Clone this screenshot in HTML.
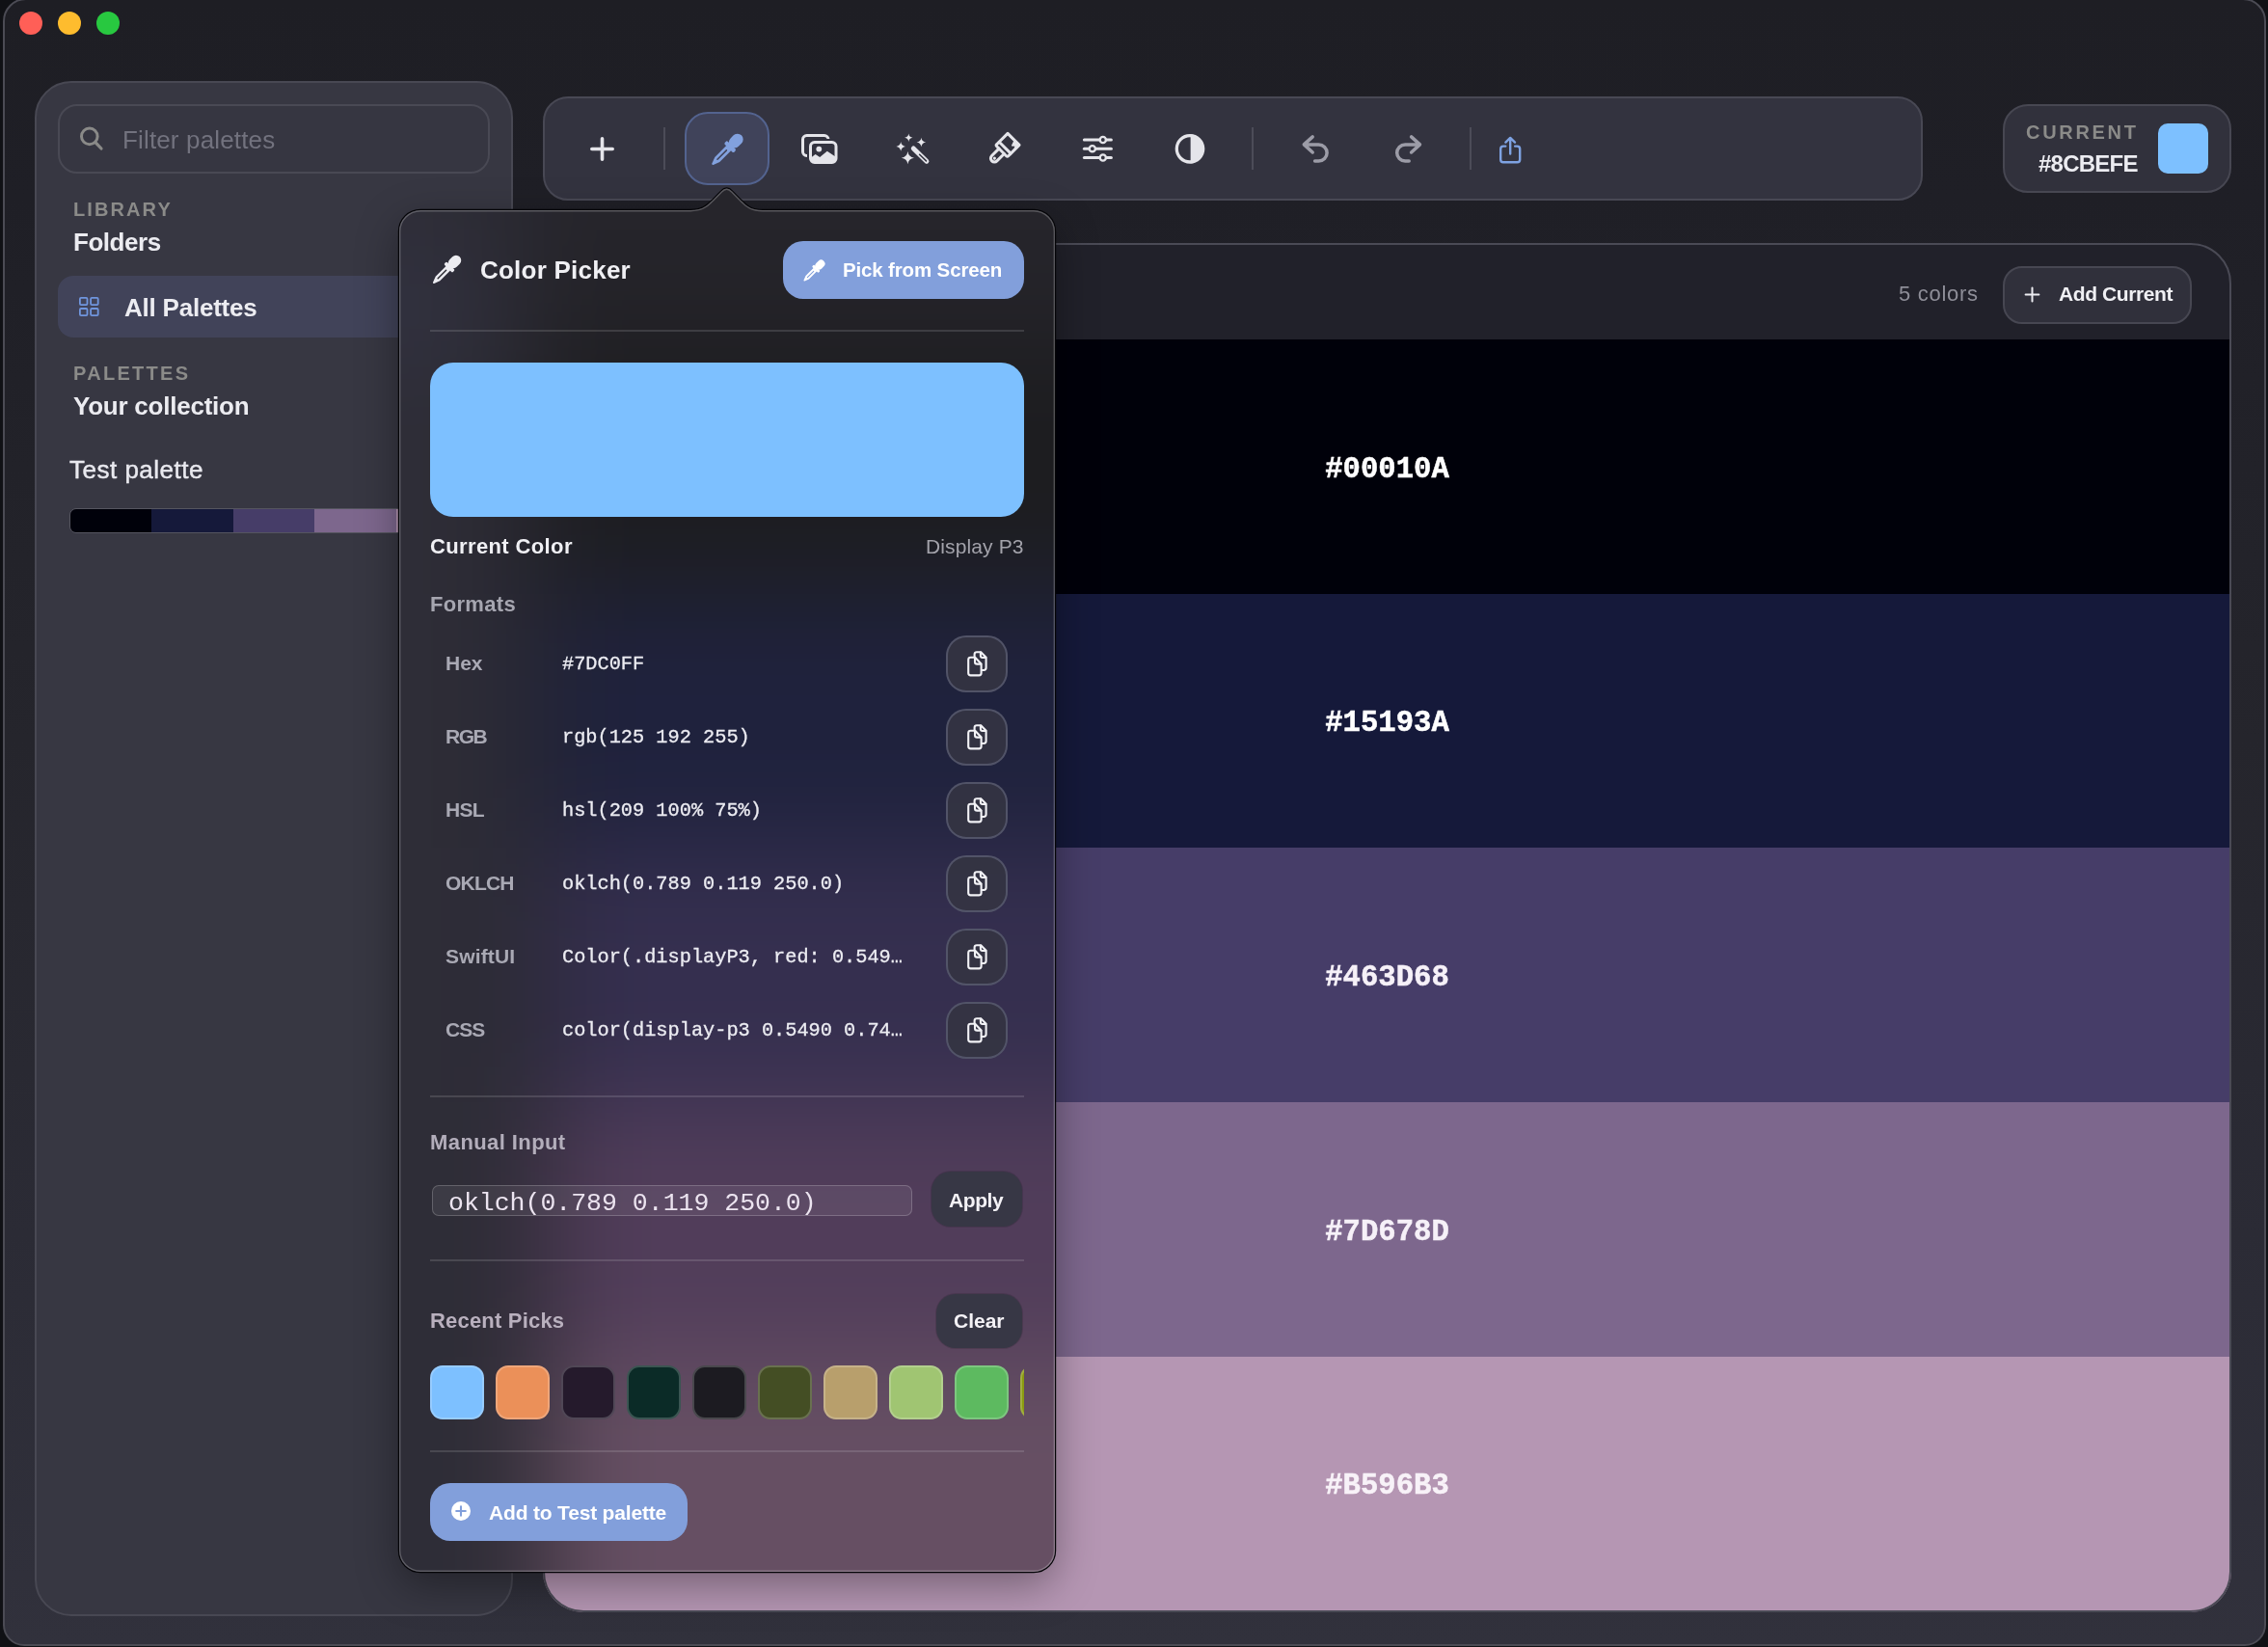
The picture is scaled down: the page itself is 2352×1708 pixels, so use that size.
<!DOCTYPE html>
<html lang="en">
<head>
<meta charset="utf-8">
<title>Color Picker</title>
<style>
*{box-sizing:border-box;margin:0;padding:0}
html,body{width:2352px;height:1708px;overflow:hidden;background:#101115}
body{position:relative;font-family:"Liberation Sans",sans-serif;color:#ececf1}
.abs{position:absolute}
.t{position:absolute;white-space:nowrap;line-height:1;font-family:"Liberation Sans",sans-serif}
.m{position:absolute;white-space:nowrap;line-height:1;font-family:"Liberation Mono",monospace}
.b{font-weight:700}
.t,.m,.hex{will-change:transform}
svg{position:absolute;overflow:visible}
#win{position:absolute;left:3px;top:-2px;width:2347px;height:1709px;border-radius:24px 24px 22px 22px;
 background:linear-gradient(180deg,#1e1e24 0%,#1f1f26 12%,#25252c 45%,#2b2b35 75%,#31313c 100%);
 border:2px solid #4b4b54}
#side{position:absolute;left:36px;top:84px;width:496px;height:1592px;border-radius:38px;background:#373742;border:2px solid #484853}
#search{position:absolute;left:60px;top:108px;width:448px;height:72px;border-radius:20px;background:#363641;border:2px solid #494954}
#allpal{position:absolute;left:60px;top:286px;width:448px;height:64px;border-radius:16px;background:#414359}
#pbar{position:absolute;left:72px;top:527px;width:424px;height:26px;border-radius:7px;overflow:hidden;border:1px solid #55555f;display:flex}
#pbar i{flex:1;display:block}
#tool{position:absolute;left:563px;top:100px;width:1431px;height:108px;border-radius:26px;background:#33333f;border:2px solid #484854}
#tsel{position:absolute;left:710px;top:116px;width:88px;height:76px;border-radius:24px;background:#40435a;border:2px solid #53638f}
.sep{position:absolute;top:132px;width:2px;height:44px;background:#4c4c58}
#cur{position:absolute;left:2077px;top:108px;width:237px;height:92px;border-radius:26px;background:#31313c;border:2px solid #474752}
#cursw{position:absolute;left:2238px;top:128px;width:52px;height:52px;border-radius:10px;background:#7dc0ff}
#main{position:absolute;left:563px;top:252px;width:1751px;height:1420px;border-radius:42px;background:#21212a;overflow:hidden}
#main .s{position:absolute;left:0;width:100%}
#mainb{position:absolute;left:563px;top:252px;width:1751px;height:1420px;border-radius:42px;border:2px solid #4a4a55;pointer-events:none}
#addcur{position:absolute;left:2077px;top:276px;width:196px;height:60px;border-radius:20px;background:#30303b;border:2px solid #474752}
.hex{position:absolute;left:563px;width:1751px;text-align:center;font-family:"Liberation Mono",monospace;font-weight:700;font-size:30.6px;line-height:1;color:#fff;-webkit-text-stroke:.5px currentColor}
#popshadow{position:absolute;left:414px;top:218px;width:680px;height:1412px;border-radius:22px;box-shadow:0 14px 44px rgba(0,0,0,.36)}
#pop{position:absolute;left:414px;top:190px;width:680px;height:1440px;overflow:hidden;background:#2a2a33;
 clip-path:path("M22,28 H302 C316,28 320,22 324.7,18 L334,8.5 Q339.6,2.5 345.2,8.5 L354.5,18 C359,22 363,28 377,28 H658 A22,22 0 0 1 680,50 V1418 A22,22 0 0 1 658,1440 H22 A22,22 0 0 1 0,1418 V50 A22,22 0 0 1 22,28 Z")}
#popbg{position:absolute;left:-414px;top:-190px;width:2352px;height:1708px;filter:blur(54px)}
#popbg div{position:absolute}
.div{position:absolute;left:446px;width:616px;height:2px;background:rgba(255,255,255,.13)}
#pick{position:absolute;left:812px;top:250px;width:250px;height:60px;border-radius:21px;background:#829fdb}
#bigsw{position:absolute;left:446px;top:376px;width:616px;height:160px;border-radius:24px;background:#7dc0ff}
.cp{position:absolute;left:981px;width:64px;height:59px;border-radius:21px;background:rgba(52,52,66,.92);border:2px solid rgba(120,124,150,.45)}
#inp{position:absolute;left:448px;top:1229px;width:498px;height:32px;border-radius:7px;background:rgba(255,255,255,.07);border:1.5px solid rgba(255,255,255,.2)}
.dbtn{position:absolute;border-radius:20px;background:#373745;box-shadow:0 0 0 1px rgba(0,0,0,.12)}
.rsw{position:absolute;top:1416px;width:56px;height:56px;border-radius:13px;border:2px solid rgba(255,255,255,.2)}
#addto{position:absolute;left:446px;top:1538px;width:267px;height:60px;border-radius:21px;background:#829fdb}
</style>
</head>
<body>
<div id="win"></div>

<!-- traffic lights -->
<div class="abs" style="left:20px;top:12px;width:24px;height:24px;border-radius:50%;background:#ff5f57"></div>
<div class="abs" style="left:60px;top:12px;width:24px;height:24px;border-radius:50%;background:#febc2e"></div>
<div class="abs" style="left:100px;top:12px;width:24px;height:24px;border-radius:50%;background:#28c840"></div>

<!-- SIDEBAR -->
<div id="side"></div>
<div id="search"></div>
<svg style="left:80px;top:129px" width="30" height="30" viewBox="0 0 30 30"><circle cx="12.8" cy="12.4" r="8.3" fill="none" stroke="#8a8a88" stroke-width="3"/><path d="M18.9 18.6 L25 25" stroke="#8a8a88" stroke-width="3.2" stroke-linecap="round"/></svg>
<div class="t" style="left:126.5px;top:131.8px;font-size:26px;letter-spacing:.15px;color:#72727e">Filter palettes</div>
<div class="t b" style="left:76px;top:206.8px;font-size:20px;color:#8b8b89;letter-spacing:2.1px">LIBRARY</div>
<div class="t b" style="left:76px;top:238px;font-size:26px;letter-spacing:-.47px">Folders</div>
<div id="allpal"></div>
<svg style="left:82px;top:308px" width="21" height="21" viewBox="0 0 21 21" fill="none" stroke="#7096de" stroke-width="1.8"><rect x="0.9" y="0.9" width="7.6" height="7.2" rx="1.2"/><rect x="12.1" y="0.9" width="7.6" height="7.2" rx="1.2"/><rect x="0.9" y="12" width="7.6" height="7.2" rx="1.2"/><rect x="12.1" y="12" width="7.6" height="7.2" rx="1.2"/></svg>
<div class="t b" style="left:128.5px;top:306px;font-size:26px;letter-spacing:-.22px">All Palettes</div>
<div class="t b" style="left:76px;top:376.9px;font-size:20px;color:#8b8b89;letter-spacing:2.3px">PALETTES</div>
<div class="t b" style="left:76px;top:408px;font-size:26px;letter-spacing:-.23px">Your collection</div>
<div class="t" style="left:72px;top:474px;font-size:26px;color:#e9e9ef;letter-spacing:.5px;-webkit-text-stroke:.45px #e9e9ef">Test palette</div>
<div id="pbar"><i style="background:#00010a"></i><i style="background:#15193a"></i><i style="background:#463d68"></i><i style="background:#7d678d"></i><i style="background:#b596b3"></i></div>

<!-- TOOLBAR -->
<div id="tool"></div>
<div id="tsel"></div>
<div class="sep" style="left:688px"></div>
<div class="sep" style="left:1298px"></div>
<div class="sep" style="left:1524px"></div>
<svg style="left:563px;top:100px" width="1431" height="108" viewBox="563 100 1431 108" fill="none">
<path d="M624.5,143.8 V165.2 M613.8,154.5 H635.2" stroke="#e5e5ea" stroke-width="3.6" stroke-linecap="round"/>
<g transform="translate(753.8,155.5) scale(1.045)" fill="#82a1de"><g transform="rotate(45)"><rect x="-5.6" y="-20.5" width="11.2" height="15.4" rx="5.6"/><rect x="-6.6" y="-6.6" width="13.2" height="4.2" rx="1.6"/><path d="M-3.4,-3 H3.4 V13.5 L0.9,20 Q0,21.4 -0.9,20 L-3.4,13.5 Z"/><rect x="-0.75" y="-0.2" width="1.5" height="14.2" rx=".75" fill="#40435a"/></g></g>
<rect x="832.5" y="140.5" width="26.5" height="21" rx="4.2" stroke="#e5e5ea" stroke-width="3"/>
<rect x="840.5" y="147.5" width="26.5" height="21" rx="4.2" fill="#33333f" stroke="#33333f" stroke-width="7"/>
<path d="M841,163.4 L845.6,160 L850.2,163 L857.8,156.8 L866.4,162.6 V168 H841 Z" fill="#e5e5ea"/>
<circle cx="849.3" cy="154.6" r="2.9" fill="#e5e5ea"/>
<rect x="840.5" y="147.5" width="26.5" height="21" rx="4.2" stroke="#e5e5ea" stroke-width="3"/>
<path d="M942.3,138.60000000000002 Q942.804,142.29600000000002 946.5,142.8 Q942.804,143.304 942.3,147.0 Q941.7959999999999,143.304 938.0999999999999,142.8 Q941.7959999999999,142.29600000000002 942.3,138.60000000000002 Z" fill="#e5e5ea"/>
<path d="M955.4,142.7 Q955.976,146.924 960.1999999999999,147.5 Q955.976,148.076 955.4,152.3 Q954.824,148.076 950.6,147.5 Q954.824,146.924 955.4,142.7 Z" fill="#e5e5ea"/>
<path d="M934.2,147.1 Q934.7760000000001,151.324 939.0,151.9 Q934.7760000000001,152.476 934.2,156.70000000000002 Q933.624,152.476 929.4000000000001,151.9 Q933.624,151.324 934.2,147.1 Z" fill="#e5e5ea"/>
<path d="M941.4,157.1 Q942.192,162.908 948.0,163.7 Q942.192,164.492 941.4,170.29999999999998 Q940.608,164.492 934.8,163.7 Q940.608,162.908 941.4,157.1 Z" fill="#e5e5ea"/>
<path d="M947.3,154 L960.9,167.2" stroke="#e5e5ea" stroke-width="5" stroke-linecap="round"/>
<path d="M953.6,160.2 L960.5,166.9" stroke="#33333f" stroke-width="1.5" stroke-linecap="round"/>
<g transform="translate(1039,156.4) rotate(45)" stroke="#e5e5ea" stroke-width="3" stroke-linejoin="round" stroke-linecap="round"><path d="M-8.5,-4 V-17 H8.5 V-4"/><path d="M1.5,-17 L3.6,-11.2 L6.3,-13.6 L8.5,-9.6 V-17 Z" fill="#e5e5ea" stroke-width="1"/><rect x="-8.5" y="-4.5" width="17" height="5" rx="1.5"/><path d="M-3.8,0.5 V11 A3.8,3.8 0 0 0 3.8,11 V0.5"/><circle cx="0" cy="10.8" r="0.9" fill="#e5e5ea" stroke-width="1.3"/></g>
<path d="M1124.4,145 H1152.4" stroke="#e5e5ea" stroke-width="3" stroke-linecap="round"/>
<circle cx="1143.8" cy="145" r="3.1" fill="#33333f" stroke="#e5e5ea" stroke-width="2.4"/>
<path d="M1124.4,154.2 H1152.4" stroke="#e5e5ea" stroke-width="3" stroke-linecap="round"/>
<circle cx="1132.8" cy="154.2" r="3.1" fill="#33333f" stroke="#e5e5ea" stroke-width="2.4"/>
<path d="M1124.4,163.5 H1152.4" stroke="#e5e5ea" stroke-width="3" stroke-linecap="round"/>
<circle cx="1143.8" cy="163.5" r="3.1" fill="#33333f" stroke="#e5e5ea" stroke-width="2.4"/>
<circle cx="1234" cy="154.3" r="13.7" stroke="#e5e5ea" stroke-width="3.3"/>
<path d="M1234.6,139.2 A15.2,15.2 0 0 1 1234.6,169.4 Z" fill="#e5e5ea"/>
<path d="M1361.2,141.9 L1352.3,149.9 L1361.2,158 M1353,149.9 H1367.5 A8.6,8.6 0 0 1 1367.5,167.1 H1363.6" stroke="#9c9ca7" stroke-width="3.5" stroke-linecap="round" stroke-linejoin="round"/>
<path d="M1463.6,141.9 L1472.5,149.9 L1463.6,158 M1471.8,149.9 H1457.3 A8.6,8.6 0 0 0 1457.3,167.1 H1461.2" stroke="#9c9ca7" stroke-width="3.5" stroke-linecap="round" stroke-linejoin="round"/>
<path d="M1561.3,151.6 H1559 Q1556.2,151.6 1556.2,154.4 V165.4 Q1556.2,168.2 1559,168.2 H1573.4 Q1576.2,168.2 1576.2,165.4 V154.4 Q1576.2,151.6 1573.4,151.6 H1571.1 M1566.2,143.4 V159.6 M1561.4,147.6 L1566.2,142.9 L1571,147.6" stroke="#7ea2e2" stroke-width="2.4" stroke-linecap="round" stroke-linejoin="round"/>
</svg>

<!-- CURRENT -->
<div id="cur"></div>
<div class="t b" style="left:2101px;top:126.6px;font-size:20px;color:#8b8b89;letter-spacing:2.7px">CURRENT</div>
<div class="t b" style="left:2114px;top:157.8px;font-size:24px;letter-spacing:-.77px;color:#ececf1">#8CBEFE</div>
<div id="cursw"></div>

<!-- MAIN PANEL -->
<div id="main">
 <div class="s" style="top:100px;height:264px;background:#00010a"></div>
 <div class="s" style="top:364px;height:264px;background:#15193a"></div>
 <div class="s" style="top:627px;height:265px;background:#463d68"></div>
 <div class="s" style="top:891px;height:264px;background:#7d678d"></div>
 <div class="s" style="top:1155px;height:266px;background:#b596b3"></div>
</div>
<div id="mainb"></div>
<div class="t" style="left:1968.5px;top:293.6px;font-size:22px;color:#8e8e98;letter-spacing:.7px">5 colors</div>
<div id="addcur"></div>
<svg style="left:2098px;top:296px" width="19" height="19" viewBox="0 0 19 19"><path d="M9.5 2.6 V16.4 M2.6 9.5 H16.4" stroke="#ececf1" stroke-width="2" stroke-linecap="round"/></svg>
<div class="t b" style="left:2134.5px;top:294.4px;font-size:21px;letter-spacing:-.41px;color:#f0f0f4">Add Current</div>
<div class="hex" style="top:471.6px">#00010A</div>
<div class="hex" style="top:735.3px">#15193A</div>
<div class="hex" style="top:999px;color:#f6f1f8">#463D68</div>
<div class="hex" style="top:1262.7px;color:#f6f1f8">#7D678D</div>
<div class="hex" style="top:1526.4px;color:#f8f2f8">#B596B3</div>

<!-- POPOVER -->
<div id="popshadow"></div>
<svg style="left:414px;top:190px" width="680" height="1440" viewBox="0 0 680 1440" fill="none"><path d="M22,28 H302 C316,28 320,22 324.7,18 L334,8.5 Q339.6,2.5 345.2,8.5 L354.5,18 C359,22 363,28 377,28 H658 A22,22 0 0 1 680,50 V1418 A22,22 0 0 1 658,1440 H22 A22,22 0 0 1 0,1418 V50 A22,22 0 0 1 22,28 Z" stroke="#050508" stroke-width="2.4"/></svg>
<div id="pop"><div id="popbg">
<div style="left:0;top:-100px;width:1700px;height:2108px;background:#25242a"></div>
<div style="left:36px;top:84px;width:496px;height:1900px;border-radius:38px 38px 0 0;background:#2e2d37"></div>
<div style="left:60px;top:286px;width:448px;height:64px;border-radius:16px;background:#333445"></div>
<div style="left:563px;top:100px;width:1200px;height:108px;border-radius:26px;background:#27262c"></div>
<div style="left:563px;top:252px;width:1200px;height:1800px;border-radius:42px 0 0 0;overflow:hidden;background:#25242a">
<div style="left:0;top:100px;width:100%;height:264px;background:#1d1d20"></div>
<div style="left:0;top:364px;width:100%;height:264px;background:#1f223d"></div>
<div style="left:0;top:627px;width:100%;height:265px;background:#352f4f"></div>
<div style="left:0;top:891px;width:100%;height:264px;background:#513d5a"></div>
<div style="left:0;top:1155px;width:100%;height:700px;background:#664f63"></div>
</div>
</div><svg style="left:0;top:0" width="680" height="1440" viewBox="0 0 680 1440" fill="none"><path d="M22,28 H302 C316,28 320,22 324.7,18 L334,8.5 Q339.6,2.5 345.2,8.5 L354.5,18 C359,22 363,28 377,28 H658 A22,22 0 0 1 680,50 V1418 A22,22 0 0 1 658,1440 H22 A22,22 0 0 1 0,1418 V50 A22,22 0 0 1 22,28 Z" stroke="rgba(255,255,255,.23)" stroke-width="2.8"/></svg></div>


<svg style="left:463px;top:280.3px" width="1" height="1" viewBox="0 0 1 1" fill="#ececf1"><g transform="scale(.945)"><g transform="rotate(45)"><rect x="-5.6" y="-20.5" width="11.2" height="15.4" rx="5.6"/><rect x="-6.6" y="-6.6" width="13.2" height="4.2" rx="1.6"/><path d="M-3.4,-3 H3.4 V13.5 L0.9,20 Q0,21.4 -0.9,20 L-3.4,13.5 Z"/><rect x="-0.75" y="-0.2" width="1.5" height="14.2" rx=".75" fill="#28282f"/></g></g></svg>
<div class="t b" style="left:497.5px;top:267.2px;font-size:26px;letter-spacing:.23px;color:#f0f0f4">Color Picker</div>
<div id="pick"></div>
<svg style="left:844.2px;top:280.8px" width="1" height="1" viewBox="0 0 1 1" fill="#fff"><g transform="scale(.71)"><g transform="rotate(45)"><rect x="-5.6" y="-20.5" width="11.2" height="15.4" rx="5.6"/><rect x="-6.6" y="-6.6" width="13.2" height="4.2" rx="1.6"/><path d="M-3.4,-3 H3.4 V13.5 L0.9,20 Q0,21.4 -0.9,20 L-3.4,13.5 Z"/><rect x="-0.75" y="-0.2" width="1.5" height="14.2" rx=".75" fill="#829fdb"/></g></g></svg>
<div class="t b" style="left:874px;top:269.6px;font-size:20.5px;letter-spacing:-.15px;color:#fff">Pick from Screen</div>
<div class="div" style="top:342px"></div>
<div id="bigsw"></div>
<div class="t b" style="left:446px;top:555.5px;font-size:22px;letter-spacing:.37px;color:#f0f0f4">Current Color</div>
<div class="t" style="right:1290px;top:556.2px;font-size:21px;letter-spacing:.12px;color:#a3a3ab">Display P3</div>
<div class="t b" style="left:446px;top:615.7px;font-size:22px;letter-spacing:.31px;color:#a6a6b0">Formats</div>
<div class="t b" style="left:462px;top:677.2px;font-size:21px;color:#a9a9b4">Hex</div>
<div class="m" style="left:582.5px;top:679.4px;font-size:20.3px;color:#ececf2;-webkit-text-stroke:.3px #ececf2">#7DC0FF</div>
<div class="cp" style="top:658.5px"></div>
<svg style="left:1002.6px;top:675.2px" width="21" height="27" viewBox="0 0 21 27" fill="none" stroke="#f2f2f6" stroke-width="2.1" stroke-linejoin="round" stroke-linecap="round"><path d="M7.6,6.6 V3.6 Q7.6,1.2 10,1.2 H14.2 L19.6,6.8 V17.6 Q19.6,20 17.2,20 H15.4" /><path d="M13.9,1.6 V5 Q13.9,7 15.9,7 H19.2"/><path d="M3.6,6.8 H8.2 L14.6,13.4 V23 Q14.6,25.4 12.2,25.4 H3.6 Q1.2,25.4 1.2,23 V9.2 Q1.2,6.8 3.6,6.8 Z"/><path d="M8,7.2 V11.4 Q8,13.6 10.2,13.6 H14.2"/></svg>
<div class="t b" style="left:462px;top:753.2px;font-size:21px;letter-spacing:-1.5px;color:#a9a9b4">RGB</div>
<div class="m" style="left:582.5px;top:755.4px;font-size:20.3px;color:#ececf2;-webkit-text-stroke:.3px #ececf2">rgb(125 192 255)</div>
<div class="cp" style="top:734.5px"></div>
<svg style="left:1002.6px;top:751.2px" width="21" height="27" viewBox="0 0 21 27" fill="none" stroke="#f2f2f6" stroke-width="2.1" stroke-linejoin="round" stroke-linecap="round"><path d="M7.6,6.6 V3.6 Q7.6,1.2 10,1.2 H14.2 L19.6,6.8 V17.6 Q19.6,20 17.2,20 H15.4" /><path d="M13.9,1.6 V5 Q13.9,7 15.9,7 H19.2"/><path d="M3.6,6.8 H8.2 L14.6,13.4 V23 Q14.6,25.4 12.2,25.4 H3.6 Q1.2,25.4 1.2,23 V9.2 Q1.2,6.8 3.6,6.8 Z"/><path d="M8,7.2 V11.4 Q8,13.6 10.2,13.6 H14.2"/></svg>
<div class="t b" style="left:462px;top:829.2px;font-size:21px;letter-spacing:-0.67px;color:#a9a9b4">HSL</div>
<div class="m" style="left:582.5px;top:831.4px;font-size:20.3px;color:#ececf2;-webkit-text-stroke:.3px #ececf2">hsl(209 100% 75%)</div>
<div class="cp" style="top:810.5px"></div>
<svg style="left:1002.6px;top:827.2px" width="21" height="27" viewBox="0 0 21 27" fill="none" stroke="#f2f2f6" stroke-width="2.1" stroke-linejoin="round" stroke-linecap="round"><path d="M7.6,6.6 V3.6 Q7.6,1.2 10,1.2 H14.2 L19.6,6.8 V17.6 Q19.6,20 17.2,20 H15.4" /><path d="M13.9,1.6 V5 Q13.9,7 15.9,7 H19.2"/><path d="M3.6,6.8 H8.2 L14.6,13.4 V23 Q14.6,25.4 12.2,25.4 H3.6 Q1.2,25.4 1.2,23 V9.2 Q1.2,6.8 3.6,6.8 Z"/><path d="M8,7.2 V11.4 Q8,13.6 10.2,13.6 H14.2"/></svg>
<div class="t b" style="left:462px;top:905.2px;font-size:21px;letter-spacing:-0.78px;color:#a9a9b4">OKLCH</div>
<div class="m" style="left:582.5px;top:907.4px;font-size:20.3px;color:#ececf2;-webkit-text-stroke:.3px #ececf2">oklch(0.789 0.119 250.0)</div>
<div class="cp" style="top:886.5px"></div>
<svg style="left:1002.6px;top:903.2px" width="21" height="27" viewBox="0 0 21 27" fill="none" stroke="#f2f2f6" stroke-width="2.1" stroke-linejoin="round" stroke-linecap="round"><path d="M7.6,6.6 V3.6 Q7.6,1.2 10,1.2 H14.2 L19.6,6.8 V17.6 Q19.6,20 17.2,20 H15.4" /><path d="M13.9,1.6 V5 Q13.9,7 15.9,7 H19.2"/><path d="M3.6,6.8 H8.2 L14.6,13.4 V23 Q14.6,25.4 12.2,25.4 H3.6 Q1.2,25.4 1.2,23 V9.2 Q1.2,6.8 3.6,6.8 Z"/><path d="M8,7.2 V11.4 Q8,13.6 10.2,13.6 H14.2"/></svg>
<div class="t b" style="left:462px;top:981.2px;font-size:21px;letter-spacing:0.16px;color:#a9a9b4">SwiftUI</div>
<div class="m" style="left:582.5px;top:983.4px;font-size:20.3px;color:#ececf2;-webkit-text-stroke:.3px #ececf2">Color(.displayP3, red: 0.549…</div>
<div class="cp" style="top:962.5px"></div>
<svg style="left:1002.6px;top:979.2px" width="21" height="27" viewBox="0 0 21 27" fill="none" stroke="#f2f2f6" stroke-width="2.1" stroke-linejoin="round" stroke-linecap="round"><path d="M7.6,6.6 V3.6 Q7.6,1.2 10,1.2 H14.2 L19.6,6.8 V17.6 Q19.6,20 17.2,20 H15.4" /><path d="M13.9,1.6 V5 Q13.9,7 15.9,7 H19.2"/><path d="M3.6,6.8 H8.2 L14.6,13.4 V23 Q14.6,25.4 12.2,25.4 H3.6 Q1.2,25.4 1.2,23 V9.2 Q1.2,6.8 3.6,6.8 Z"/><path d="M8,7.2 V11.4 Q8,13.6 10.2,13.6 H14.2"/></svg>
<div class="t b" style="left:462px;top:1057.2px;font-size:21px;letter-spacing:-0.93px;color:#a9a9b4">CSS</div>
<div class="m" style="left:582.5px;top:1059.4px;font-size:20.3px;color:#ececf2;-webkit-text-stroke:.3px #ececf2">color(display-p3 0.5490 0.74…</div>
<div class="cp" style="top:1038.5px"></div>
<svg style="left:1002.6px;top:1055.2px" width="21" height="27" viewBox="0 0 21 27" fill="none" stroke="#f2f2f6" stroke-width="2.1" stroke-linejoin="round" stroke-linecap="round"><path d="M7.6,6.6 V3.6 Q7.6,1.2 10,1.2 H14.2 L19.6,6.8 V17.6 Q19.6,20 17.2,20 H15.4" /><path d="M13.9,1.6 V5 Q13.9,7 15.9,7 H19.2"/><path d="M3.6,6.8 H8.2 L14.6,13.4 V23 Q14.6,25.4 12.2,25.4 H3.6 Q1.2,25.4 1.2,23 V9.2 Q1.2,6.8 3.6,6.8 Z"/><path d="M8,7.2 V11.4 Q8,13.6 10.2,13.6 H14.2"/></svg>
<div class="div" style="top:1136px"></div>
<div class="t b" style="left:446px;top:1173.6px;font-size:22px;letter-spacing:.41px;color:#b3aebb">Manual Input</div>
<div id="inp"></div>
<div class="m" style="left:464.8px;top:1235.1px;font-size:26.5px;color:#ece4f0">oklch(0.789 0.119 250.0)</div>
<div class="dbtn" style="left:966px;top:1215px;width:94px;height:57px"></div>
<div class="t b" style="left:984px;top:1233.9px;font-size:21px;letter-spacing:-.4px;color:#f4f2f6">Apply</div>
<div class="div" style="top:1306px"></div>
<div class="t b" style="left:446px;top:1359px;font-size:22px;letter-spacing:.19px;color:#b9b0be">Recent Picks</div>
<div class="dbtn" style="left:971px;top:1342px;width:89px;height:56px"></div>
<div class="t b" style="left:988.5px;top:1358.9px;font-size:21px;color:#f4f2f6">Clear</div>
<div class="abs" style="left:446px;top:1400px;width:616px;height:90px;overflow:hidden">
<div class="rsw" style="left:0px;top:16px;background:#7dc0ff"></div>
<div class="rsw" style="left:68px;top:16px;background:#eb9059"></div>
<div class="rsw" style="left:136px;top:16px;background:#251a2c"></div>
<div class="rsw" style="left:204px;top:16px;background:#0b2b27"></div>
<div class="rsw" style="left:272px;top:16px;background:#1c1b21"></div>
<div class="rsw" style="left:340px;top:16px;background:#444e24"></div>
<div class="rsw" style="left:408px;top:16px;background:#b89f6c"></div>
<div class="rsw" style="left:476px;top:16px;background:#a0c572"></div>
<div class="rsw" style="left:544px;top:16px;background:#5dba60"></div>
<div class="rsw" style="left:612px;top:16px;background:#8a9a10"></div>
</div>
<div class="div" style="top:1504px"></div>
<div id="addto"></div>
<svg style="left:468px;top:1557px" width="20" height="20" viewBox="0 0 20 20"><circle cx="10" cy="10" r="10" fill="#fff"/><path d="M10 5.2 V14.8 M5.2 10 H14.8" stroke="#829fdb" stroke-width="2.1" stroke-linecap="round"/></svg>
<div class="t b" style="left:507px;top:1557.7px;font-size:21px;letter-spacing:-.18px;color:#fff">Add to Test palette</div>
</body>
</html>
